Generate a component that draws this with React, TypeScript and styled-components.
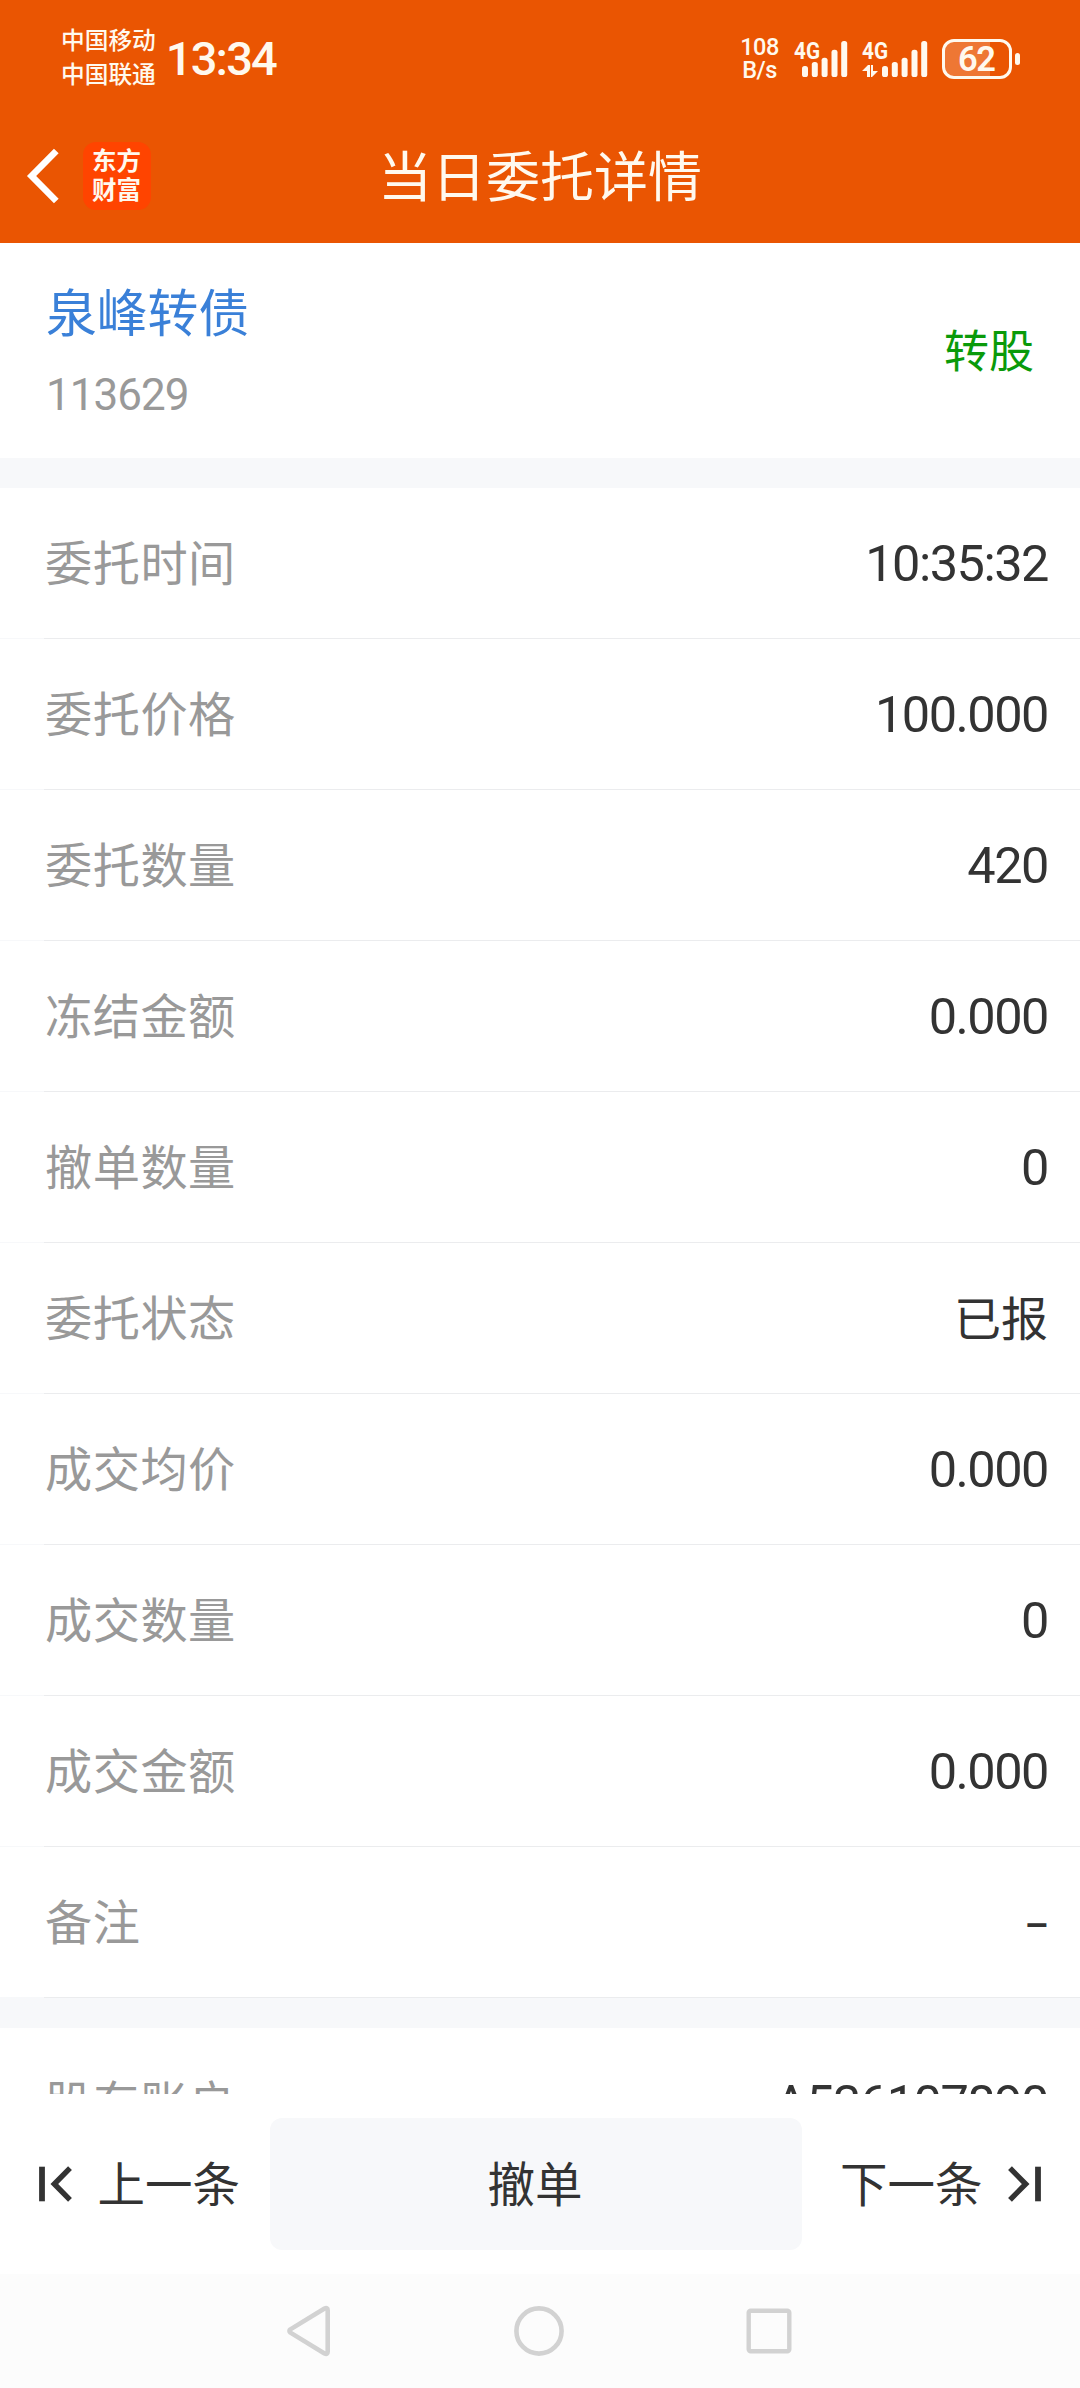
import React from "react";
import styled, { createGlobalStyle } from "styled-components";

const cjk = `"Noto Sans CJK SC", sans-serif`;
const latin = `Roboto, "Noto Sans CJK SC", sans-serif`;

const GlobalStyle = createGlobalStyle`
  * { box-sizing: border-box; }
  body { margin: 0; background: #fff; font-family: ${cjk}; }
  button { border: 0; padding: 0; background: none; font: inherit; color: inherit; }
  svg { display: block; flex: none; overflow: visible; }
`;

const Screen = styled.div`
  width: 1080px;
  height: 2388px;
  display: flex;
  flex-direction: column;
  overflow: hidden;
  background: #fff;
`;

const Header = styled.header`
  flex: none;
  height: 243px;
  background: #ea5502;
  color: #fff9ee;
`;

const StatusBar = styled.div`
  height: 110px;
  padding: 4px 59px 0 61px;
  display: flex;
  align-items: center;
`;

const Carriers = styled.div`
  font-size: 23.7px;
  line-height: 34px;
  padding-bottom: 3px;
  font-weight: 500;
`;

const Clock = styled.div`
  margin-left: 10px;
  padding-top: 3px;
  font: 500 47px/60px ${latin};
  letter-spacing: -1.8px;
`;

const StatusRight = styled.div`
  margin-left: auto;
  padding-top: 4px;
  display: flex;
  align-items: center;
`;

const NetSpeed = styled.div`
  width: 39px;
  margin-right: 15px;
  font: 500 23.5px/23px ${latin};
  letter-spacing: -0.5px;
  text-align: center;
`;

const TitleBar = styled.div`
  height: 133px;
  padding: 0 27px;
  display: grid;
  grid-template-columns: 200px 1fr 200px;
  align-items: center;
`;

const TitleLeft = styled.div`
  display: flex;
  align-items: center;
  gap: 24px;
  padding-bottom: 2px;
`;

const Logo = styled.div`
  width: 68px;
  height: 68px;
  border-radius: 13px;
  background: #ff4400;
  font-size: 24.5px;
  font-weight: 700;
  line-height: 29px;
  text-align: center;
  padding: 3px 1px 0 0;
`;

const Title = styled.h1`
  margin: 0;
  padding-bottom: 5px;
  font-size: 54px;
  line-height: 70px;
  font-weight: 400;
  text-align: center;
`;

const Body = styled.main`
  flex: none;
  height: 1851px;
  overflow: hidden;
  background: #fff;
`;

const Summary = styled.section`
  height: 215px;
  padding: 0 46px;
  display: flex;
  align-items: center;
  justify-content: space-between;
`;

const StockName = styled.div`
  color: #3a80d8;
  font-size: 50.8px;
  line-height: 70px;
`;

const StockCode = styled.div`
  margin-top: 18px;
  color: #999;
  font: 400 44px/64px ${latin};
  letter-spacing: -1px;
`;

const Side = styled.div`
  color: #0a9a0a;
  font-size: 45px;
  line-height: 60px;
  padding-bottom: 4px;
`;

const Spacer = styled.div`
  height: 30px;
  background: #f7f8fa;
`;

const Row = styled.div`
  height: 151px;
  padding: 0 31px 0 45px;
  display: flex;
  align-items: center;
  justify-content: space-between;
  border-bottom: 1px solid #ebecee;
  border-image: linear-gradient(to right, #f7f8fa 45px, #ebecee 45px) 1;
`;

const Label = styled.span`
  color: #999;
  font-size: 47.2px;
  letter-spacing: 0.5px;
  line-height: 60px;
  padding-bottom: 5px;
`;

const Value = styled.span`
  color: #333;
  font: 400 50.5px/60px ${latin};
  letter-spacing: -1.5px;
  padding: 2px 1px 0 0;
`;

const TextValue = styled(Value)`
  font: 400 47px/60px ${cjk};
  letter-spacing: 0;
  padding: 0 1px 5px 0;
`;

const EmptyValue = styled(Value)`
  font-size: 38px;
  font-weight: 500;
  letter-spacing: 0;
  padding: 7px 0 0;
`;

const Actions = styled.footer`
  flex: none;
  height: 180px;
  padding: 0 39px;
  display: grid;
  grid-template-columns: 231px 532px 239px;
  align-items: center;
  color: #333;
  font-size: 47.5px;
  line-height: 60px;
`;

const StepButton = styled.button<{ $end?: boolean }>`
  display: flex;
  align-items: center;
  justify-content: ${(p) => (p.$end ? "flex-end" : "flex-start")};
  gap: 24.5px;
`;

const ButtonText = styled.span`
  padding-bottom: 5px;
  white-space: nowrap;
`;

const CancelButton = styled.button`
  height: 132px;
  display: flex;
  align-items: center;
  justify-content: center;
  padding-right: 2px;
  border-radius: 12px;
  background: #f7f8fa;
`;

const NavBar = styled.nav`
  flex: none;
  height: 114px;
  padding: 0 288px 0 286px;
  display: flex;
  align-items: center;
  justify-content: space-between;
  background: #fcfcfc;
`;

const BARS = [
  { x: 0, top: 27 },
  { x: 9.8, top: 23 },
  { x: 19.6, top: 18.7 },
  { x: 29.5, top: 10.7 },
  { x: 39.2, top: 2 },
];

function Signal({ data }: { data?: boolean }) {
  const offset = data ? 20 : 8;
  return (
    <svg width={data ? 80 : 68} height="40" viewBox={`0 0 ${data ? 80 : 68} 40`} fill="currentColor">
      <text x="0" y="20" fontFamily="Roboto" fontWeight="700" fontSize="24.5" textLength="26" lengthAdjust="spacingAndGlyphs">4G</text>
      {BARS.map((b) => (
        <rect key={b.x} x={offset + b.x} y={b.top} width="6" height={38 - b.top} rx="2.6" />
      ))}
      {data && <path d="M0 32 6 26h2v12H5v-6zM16 32l-6 6H9V26h2v6z" />}
    </svg>
  );
}

function Battery() {
  return (
    <svg width="79" height="40" viewBox="0 0 79 40" fill="none">
      <path d="M12 1.5h36v37H12A10.5 10.5 0 0 1 1.5 28V12A10.5 10.5 0 0 1 12 1.5z" fill="#fff" fillOpacity=".2" />
      <rect x="1.5" y="1.5" width="67" height="37" rx="10.5" stroke="currentColor" strokeWidth="3" />
      <rect x="73" y="14" width="5" height="12" rx="2.5" fill="currentColor" />
      <text x="35" y="32.3" textAnchor="middle" fontFamily="Roboto" fontWeight="600" fontSize="34.5" textLength="38" fill="currentColor">62</text>
    </svg>
  );
}

function StepIcon({ flip }: { flip?: boolean }) {
  return (
    <svg width="34" height="36" viewBox="0 0 34 36" fill="none" stroke="currentColor">
      <g transform={flip ? "translate(34 0) scale(-1 1)" : undefined}>
        <path d="M3 .7v34.6" strokeWidth="5.8" />
        <path d="M31 2.2 15.3 18 31 33.8" strokeWidth="5.4" />
      </g>
    </svg>
  );
}

const ROWS: { label: string; value: string; kind?: "text" | "empty" }[] = [
  { label: "委托时间", value: "10:35:32" },
  { label: "委托价格", value: "100.000" },
  { label: "委托数量", value: "420" },
  { label: "冻结金额", value: "0.000" },
  { label: "撤单数量", value: "0" },
  { label: "委托状态", value: "已报", kind: "text" },
  { label: "成交均价", value: "0.000" },
  { label: "成交数量", value: "0" },
  { label: "成交金额", value: "0.000" },
  { label: "备注", value: "–", kind: "empty" },
];

export default function App() {
  return (
    <>
      <GlobalStyle />
      <Screen>
        <Header>
          <StatusBar>
            <Carriers>
              <div>中国移动</div>
              <div>中国联通</div>
            </Carriers>
            <Clock>13:34</Clock>
            <StatusRight>
              <NetSpeed>
                <div>108</div>
                <div>B/s</div>
              </NetSpeed>
              <Signal />
              <Signal data />
              <Battery />
            </StatusRight>
          </StatusBar>
          <TitleBar>
            <TitleLeft>
              <svg width="32" height="56" viewBox="0 0 32 56" fill="none" stroke="#fff" strokeWidth="6.6">
                <path d="M29.3 3 4.6 28l24.7 25" />
              </svg>
              <Logo>
                <div>东方</div>
                <div>财富</div>
              </Logo>
            </TitleLeft>
            <Title>当日委托详情</Title>
          </TitleBar>
        </Header>
        <Body>
          <Summary>
            <div>
              <StockName>泉峰转债</StockName>
              <StockCode>113629</StockCode>
            </div>
            <Side>转股</Side>
          </Summary>
          <Spacer />
          {ROWS.map((r) => {
            const Cell = r.kind === "text" ? TextValue : r.kind === "empty" ? EmptyValue : Value;
            return (
              <Row key={r.label}>
                <Label>{r.label}</Label>
                <Cell>{r.value}</Cell>
              </Row>
            );
          })}
          <Spacer />
          <Row>
            <Label>股东账户</Label>
            <Value>A536107890</Value>
          </Row>
        </Body>
        <Actions>
          <StepButton>
            <StepIcon />
            <ButtonText>上一条</ButtonText>
          </StepButton>
          <CancelButton>
            <ButtonText>撤单</ButtonText>
          </CancelButton>
          <StepButton $end>
            <ButtonText>下一条</ButtonText>
            <StepIcon flip />
          </StepButton>
        </Actions>
        <NavBar>
          <svg width="45" height="52" viewBox="0 0 45 52" fill="none" stroke="#d2d2d2" strokeWidth="4.6" strokeLinejoin="round">
            <path d="M4.4 24.4 38.5 3.5Q41.7 2 41.7 5.2v41.6Q41.7 50 38.5 48.5L4.4 27.6Q2.4 26 4.4 24.4z" />
          </svg>
          <svg width="50" height="50" viewBox="0 0 50 50" fill="none" stroke="#d2d2d2" strokeWidth="4.6">
            <circle cx="25" cy="25" r="22.6" />
          </svg>
          <svg width="46" height="46" viewBox="0 0 46 46" fill="none" stroke="#d2d2d2" strokeWidth="4.4">
            <rect x="2.7" y="2.7" width="40.6" height="40.6" rx="2" />
          </svg>
        </NavBar>
      </Screen>
    </>
  );
}
